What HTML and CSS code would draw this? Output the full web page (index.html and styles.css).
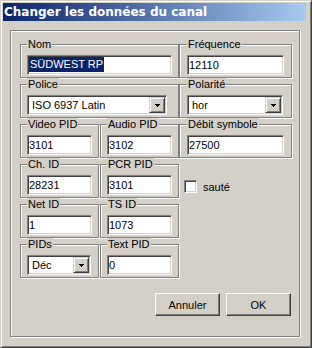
FILE: index.html
```html
<!DOCTYPE html>
<html lang="fr">
<head>
    <meta charset="UTF-8">
    <title>Changer les données du canal</title>
    <link rel="stylesheet" href="styles.css">
</head>
<body>
    <div class="window">
        <div class="titlebar">Changer les données du canal</div>
        <div class="frame">
            <div class="grid">
                <div class="grp span2">
                    <span class="lbl">Nom</span>
                    <div class="edit"><span class="sel">SÜDWEST RP</span></div>
                </div>
                <div class="grp wide">
                    <span class="lbl">Fréquence</span>
                    <div class="edit">12110</div>
                </div>

                <div class="grp span2">
                    <span class="lbl">Police</span>
                    <div class="combo police">
                        <span class="val">ISO 6937 Latin</span>
                        <span class="drop"><svg width="5" height="3" viewBox="0 0 5 3"><path d="M0 0h5v1h-1v1h-1v1h-1v-1h-1v-1h-1z"/></svg></span>
                    </div>
                </div>
                <div class="grp wide">
                    <span class="lbl">Polarité</span>
                    <div class="combo polar">
                        <span class="val">hor</span>
                        <span class="drop"><svg width="5" height="3" viewBox="0 0 5 3"><path d="M0 0h5v1h-1v1h-1v1h-1v-1h-1v-1h-1z"/></svg></span>
                    </div>
                </div>

                <div class="grp c1">
                    <span class="lbl">Video PID</span>
                    <div class="edit">3101</div>
                </div>
                <div class="grp">
                    <span class="lbl">Audio PID</span>
                    <div class="edit">3102</div>
                </div>
                <div class="grp wide">
                    <span class="lbl">Débit symbole</span>
                    <div class="edit">27500</div>
                </div>

                <div class="grp c1">
                    <span class="lbl">Ch. ID</span>
                    <div class="edit">28231</div>
                </div>
                <div class="grp">
                    <span class="lbl">PCR PID</span>
                    <div class="edit">3101</div>
                </div>
                <div class="check">
                    <span class="box"></span>
                    <span>sauté</span>
                </div>

                <div class="grp c1">
                    <span class="lbl">Net ID</span>
                    <div class="edit">1</div>
                </div>
                <div class="grp">
                    <span class="lbl">TS ID</span>
                    <div class="edit">1073</div>
                </div>
                <div></div>

                <div class="grp c1">
                    <span class="lbl">PIDs</span>
                    <div class="combo pids">
                        <span class="val">Déc</span>
                        <span class="drop"><svg width="5" height="3" viewBox="0 0 5 3"><path d="M0 0h5v1h-1v1h-1v1h-1v-1h-1v-1h-1z"/></svg></span>
                    </div>
                </div>
                <div class="grp">
                    <span class="lbl">Text PID</span>
                    <div class="edit">0</div>
                </div>
                <div></div>
            </div>
            <div class="buttons">
                <button type="button">Annuler</button>
                <button type="button">OK</button>
            </div>
        </div>
    </div>
</body>
</html>
```

FILE: styles.css
```css
* { box-sizing: border-box; }
body {
    margin: 0;
    background: #d4d0c8;
    font-family: "Liberation Sans", Arial, sans-serif;
    font-size: 11px;
    color: #000;
}
.window {
    width: 312px;
    height: 348px;
    background: #d4d0c8;
    border: 1px solid;
    border-color: #d4d0c8 #404040 #404040 #d4d0c8;
    box-shadow: inset 1px 1px #fff, inset -1px -1px #808080;
    padding: 2px 5px 0 2px;
}
.titlebar {
    height: 18px;
    line-height: 18px;
    padding-left: 1px;
    color: #fff;
    font-family: "DejaVu Sans", Verdana, sans-serif;
    font-weight: bold;
    font-size: 12px;
    background: linear-gradient(to right, #0a246a, #a6caf0);
    white-space: nowrap;
}
.frame {
    margin: 9px 0 0 7px;
    width: 290px;
    height: 307px;
    border: 1px solid #808080;
    box-shadow: inset 1px 1px #fff, 1px 1px #fff;
    padding: 7px 7px 0 9px;
}
.grid {
    display: grid;
    grid-template-columns: 80px 79px 113px;
    grid-template-rows: repeat(6, 40px);
}
.grp {
    margin-top: 6px;
    height: 34px;
    border: 1px solid #808080;
    box-shadow: inset 1px 1px #fff, 1px 1px #fff;
    padding: 0 6px;
}
.grp.span2 { grid-column: span 2; }
.grp.c1 { margin-right: 1px; }
.grp.wide { padding: 0 7px; }
.lbl {
    display: block;
    width: max-content;
    margin-top: -7px;
    padding: 0 1px;
    line-height: 13px;
    height: 13px;
    background: #d4d0c8;
}
.edit, .combo {
    margin-top: 4px;
    height: 20px;
    background: #fff;
    border: 1px solid;
    border-color: #808080 #fff #fff #808080;
    box-shadow: inset 1px 1px #404040, inset -1px -1px #d4d0c8;
}
.edit {
    padding-left: 1px;
    line-height: 16px;
    padding-top: 1px;
    white-space: nowrap;
}
.sel {
    display: inline-block;
    background: #0a246a;
    color: #fff;
    line-height: 15px;
    padding: 0 1px;
}
.edit:has(.sel) { padding-top: 0; }
.combo {
    display: flex;
    align-items: center;
    padding: 1px;
}
.combo.police { width: 140px; }
.combo.polar { width: 96px; }
.combo.pids { width: 64px; }
.combo .val {
    flex: 1;
    padding-left: 3px;
    white-space: nowrap;
}
.drop {
    width: 16px;
    height: 16px;
    display: flex;
    align-items: center;
    justify-content: center;
    background: #d4d0c8;
    border: 1px solid;
    border-color: #d4d0c8 #404040 #404040 #d4d0c8;
    box-shadow: inset 1px 1px #fff, inset -1px -1px #808080;
}
.drop svg { display: block; }
.check {
    display: flex;
    align-items: center;
    gap: 6px;
    padding: 22px 0 0 5px;
    height: 35px;
}
.check .box {
    width: 13px;
    height: 13px;
    background: #fff;
    border: 1px solid;
    border-color: #808080 #fff #fff #808080;
    box-shadow: inset 1px 1px #404040, inset -1px -1px #d4d0c8;
}
.buttons {
    display: flex;
    justify-content: flex-end;
    gap: 6px;
    margin: 15px 1px 0 0;
}
.buttons button {
    width: 65px;
    height: 23px;
    font: 11px "Liberation Sans", Arial, sans-serif;
    color: #000;
    background: #d4d0c8;
    border: 1px solid;
    border-color: #fff #404040 #404040 #fff;
    box-shadow: inset -1px -1px #808080;
    padding: 0;
}
```
